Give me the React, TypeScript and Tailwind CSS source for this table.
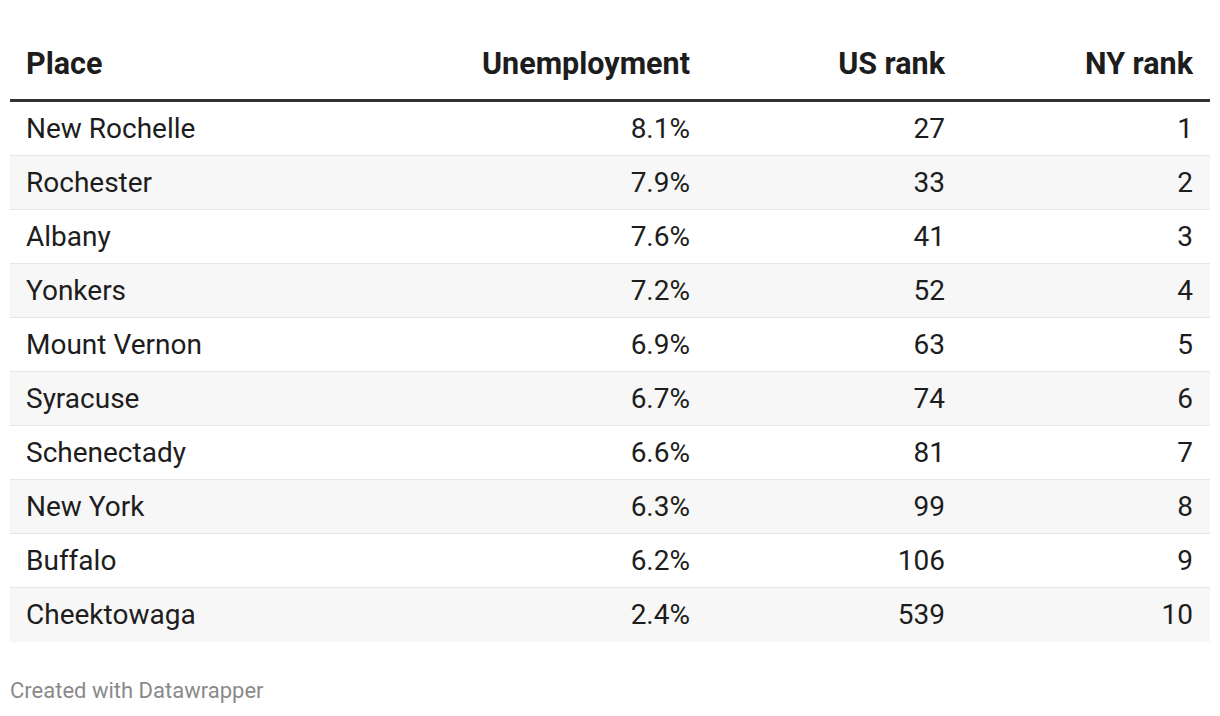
import React from 'react';

interface Row {
  place: string;
  rate: string;
  us: number;
  ny: number;
}

const rows: Row[] = [
  { place: 'New Rochelle', rate: '8.1%', us: 27, ny: 1 },
  { place: 'Rochester', rate: '7.9%', us: 33, ny: 2 },
  { place: 'Albany', rate: '7.6%', us: 41, ny: 3 },
  { place: 'Yonkers', rate: '7.2%', us: 52, ny: 4 },
  { place: 'Mount Vernon', rate: '6.9%', us: 63, ny: 5 },
  { place: 'Syracuse', rate: '6.7%', us: 74, ny: 6 },
  { place: 'Schenectady', rate: '6.6%', us: 81, ny: 7 },
  { place: 'New York', rate: '6.3%', us: 99, ny: 8 },
  { place: 'Buffalo', rate: '6.2%', us: 106, ny: 9 },
  { place: 'Cheektowaga', rate: '2.4%', us: 539, ny: 10 },
];

const cols = 'grid grid-cols-[1fr_256px_255px_249px]';

const App: React.FC = () => {
  return (
    <div className="w-[1220px] h-[716px] bg-white px-[10px] font-['Roboto',sans-serif] text-[#1d1d1d]">
      {/* header */}
      <div className={`${cols} pt-[46px] pb-[17px] border-b-[3px] border-[#333333] text-[30.5px] leading-[36px] font-bold`}>
        <div className="px-[16px]">Place</div>
        <div className="px-[16px] text-right">Unemployment</div>
        <div className="px-[16px] text-right">US rank</div>
        <div className="px-[17px] text-right">NY rank</div>
      </div>

      {/* body */}
      <div>
        {rows.map((r, i) => (
          <div
            key={r.place}
            className={`${cols} h-[54px] items-center text-[28px] leading-[32px] ${
              i % 2 === 1 ? 'bg-[#f7f7f7]' : 'bg-white'
            } ${i < rows.length - 1 ? 'border-b border-[#e6e6e6]' : ''}`}
          >
            <div className="px-[16px]">{r.place}</div>
            <div className="px-[16px] text-right">{r.rate}</div>
            <div className="px-[16px] text-right">{r.us}</div>
            <div className="px-[17px] text-right">{r.ny}</div>
          </div>
        ))}
      </div>

      <div className="pt-[36px] text-[22px] leading-[26px] text-[#8a8a8a]">Created with Datawrapper</div>
    </div>
  );
};

export default App;
